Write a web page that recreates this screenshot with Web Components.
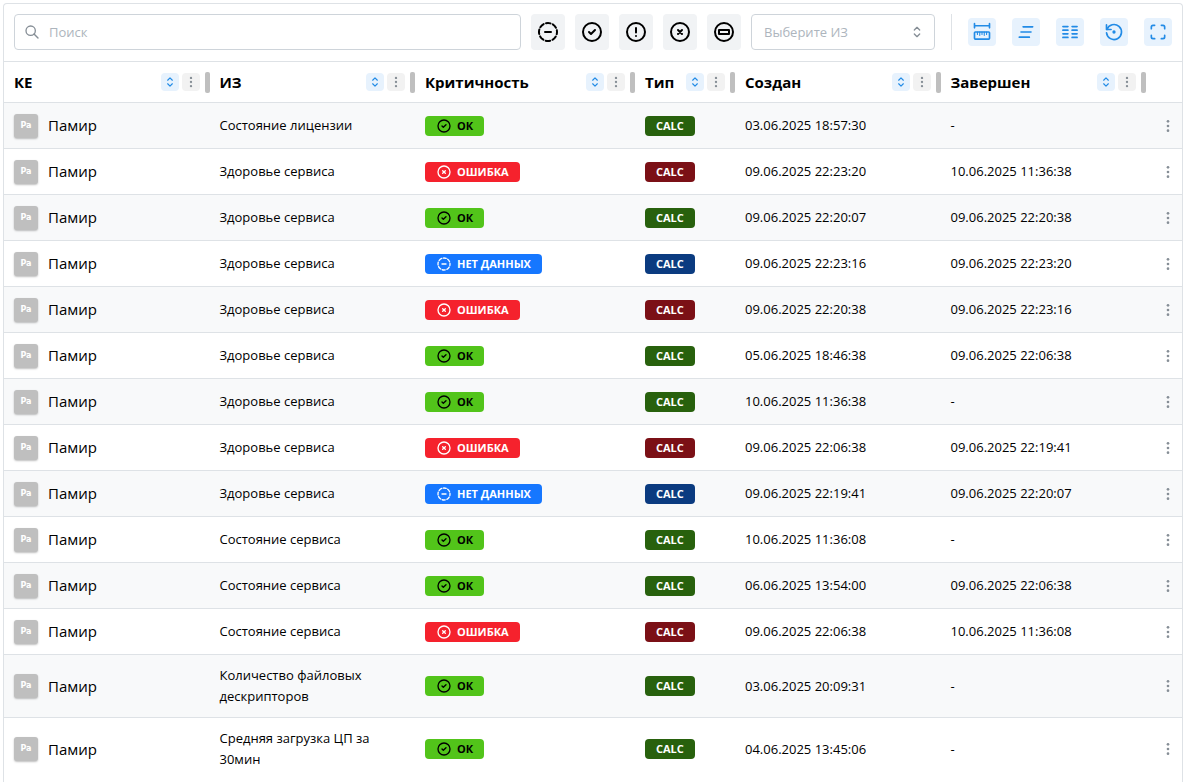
<!DOCTYPE html>
<html lang="ru">
<head>
<meta charset="utf-8">
<meta name="viewport" content="width=device-width, initial-scale=1">
<title>События</title>
<style>
  body {
    margin: 0;
    padding: 3px 3px 0;
    background: #fff;
    color: #000;
    font-family: "Open Sans", "Noto Sans", sans-serif;
    font-size: 13px;
    line-height: 21px;
  }
</style>
</head>
<body>
<event-panel>
  <event-toolbar slot="toolbar"></event-toolbar>
  <event-table></event-table>
</event-panel>

<script>
  const ICONS = {
    search: '<circle cx="10" cy="10" r="7"/><path d="M21 21l-6-6"/>',
    nodata: '<circle cx="12" cy="12" r="9" stroke-dasharray="4.6 2.469" stroke-dashoffset="2.3"/><path d="M9 12h6"/>',
    ok: '<circle cx="12" cy="12" r="9"/><path d="M9 12l2 2l4-4"/>',
    warning: '<circle cx="12" cy="12" r="9"/><path d="M12 8v4.5M12 16v.01"/>',
    error: '<circle cx="12" cy="12" r="9"/><path d="M10 10l4 4m0-4l-4 4"/>',
    disabled: '<circle cx="12" cy="12" r="9"/><rect x="7" y="10" width="10" height="4"/>',
    selector: '<path d="M8 9l4-4l4 4M16 15l-4 4l-4-4"/>',
    dots: '<g fill="currentColor" stroke="none"><circle cx="12" cy="5" r="2"/><circle cx="12" cy="12" r="2"/><circle cx="12" cy="19" r="2"/></g>',
    ruler: '<path d="M3 4.500h18M3 2v5M21 2v5"/><rect x="3" y="12" width="18" height="8.500" rx="1"/><path d="M6.500 12v3M9.300 12v4M12 12v3M14.700 12v4M17.500 12v3" stroke-width="1.300"/>',
    density: '<path d="M8.500 5.800h11.500M6 12h12M4 18.200h12"/>',
    columns: '<path d="M3.500 5.500h6M3.500 9.800h6M3.500 14.200h6M3.500 18.500h6M14.500 5.500h6M14.500 9.800h6M14.500 14.200h6M14.500 18.500h6"/>',
    restore: '<path d="M3.060 13a9 9 0 1 0 .490-4.090"/><path d="M3 3.500v5.500h5.500"/><circle cx="12" cy="12" r="1" fill="currentColor"/>',
    fullscreen: '<path d="M4 8V6a2 2 0 0 1 2-2h2M16 4h2a2 2 0 0 1 2 2v2M20 16v2a2 2 0 0 1-2 2h-2M8 20H6a2 2 0 0 1-2-2v-2"/>'
  };

  /* Outline icon; its size and stroke come from --size and --stroke. */
  class UiIcon extends HTMLElement {
    connectedCallback() {
      this.attachShadow({ mode: 'open' }).innerHTML = `
        <style>
          :host { display: inline-flex; flex: none; }
          svg {
            width: var(--size, 24px); height: var(--size, 24px);
            fill: none; stroke: currentColor; stroke-width: var(--stroke, 2);
            stroke-linecap: round; stroke-linejoin: round;
          }
        </style>
        <svg viewBox="0 0 24 24" aria-hidden="true">${ICONS[this.getAttribute('name')]}</svg>`;
    }
  }
  customElements.define('ui-icon', UiIcon);

  /* Square button with one icon; kind: filter, action, sort, menu, row. */
  class IconButton extends HTMLElement {
    connectedCallback() {
      this.attachShadow({ mode: 'open' }).innerHTML = `
        <style>
          :host { display: inline-flex; flex: none; }
          button {
            display: flex; align-items: center; justify-content: center;
            width: 18px; height: 18px; padding: 0; border: 0; border-radius: 4px;
            background: #f1f3f5; color: #000; cursor: pointer;
          }
          :host([kind="filter"]) button { width: 34px; height: 36px; }
          :host([kind="action"]) button { width: 28px; height: 28px; background: #e7f2fd; color: #228be6; --size: 20px; }
          :host([kind="sort"]) button { background: #e7f2fd; color: #228be6; --size: 14px; }
          :host([kind="menu"]) button { background: #f2f2f2; color: #868e96; --size: 14px; }
          :host([kind="row"]) { display: flex; justify-content: flex-end; }
          :host([kind="row"]) button { background: none; color: #868e96; --size: 16px; }
        </style>
        <button type="button" aria-label="${this.getAttribute('label')}"><ui-icon name="${this.getAttribute('icon')}"></ui-icon></button>`;
    }
  }
  customElements.define('icon-button', IconButton);

  class StatusBadge extends HTMLElement {
    connectedCallback() {
      const icon = this.getAttribute('icon');
      this.attachShadow({ mode: 'open' }).innerHTML = `
        <style>
          :host {
            display: flex; align-items: center; gap: 5px; width: fit-content;
            box-sizing: border-box; height: 20px; padding: 0 11px; border-radius: 4px;
            color: #fff; font-size: 11px; font-weight: 700; line-height: 20px; white-space: nowrap;
            --size: 16px;
          }
          :host([tone="ok"]) { background: #52c41a; color: #000; }
          :host([tone="error"]) { background: #f5222d; }
          :host([tone="nodata"]) { background: #1677ff; }
          :host([tone="ok-dark"]) { background: #28610d; }
          :host([tone="error-dark"]) { background: #7b1016; }
          :host([tone="nodata-dark"]) { background: #0b3b80; }
        </style>
        ${icon ? `<ui-icon name="${icon}"></ui-icon>` : ''}<slot></slot>`;
    }
  }
  customElements.define('status-badge', StatusBadge);

  class ItemLabel extends HTMLElement {
    connectedCallback() {
      this.attachShadow({ mode: 'open' }).innerHTML = `
        <style>
          :host { display: flex; align-items: center; gap: 10px; font-size: 15px; line-height: 25px; }
          .mark {
            width: 24px; height: 24px; border-radius: 3px; background: #bfbfbf; color: #fff;
            box-shadow: 0 1px 2px rgba(0, 0, 0, .25);
            font: 700 8px/24px "DejaVu Sans", sans-serif; text-align: center;
          }
        </style>
        <span class="mark">${this.getAttribute('mark')}</span><slot></slot>`;
    }
  }
  customElements.define('item-label', ItemLabel);

  class EventToolbar extends HTMLElement {
    connectedCallback() {
      const filters = [['nodata', 'Нет данных'], ['ok', 'ОК'], ['warning', 'Предупреждение'], ['error', 'Ошибка'], ['disabled', 'Отключено']];
      const actions = [['ruler', 'Ширина'], ['density', 'Плотность'], ['columns', 'Колонки'], ['restore', 'Сбросить'], ['fullscreen', 'На весь экран']];
      const buttons = (list, kind) => list.map(([icon, label]) =>
        `<icon-button kind="${kind}" icon="${icon}" label="${label}"></icon-button>`).join('');
      this.attachShadow({ mode: 'open' }).innerHTML = `
        <style>
          :host { display: flex; align-items: center; gap: 10px; padding: 10px 10px 11px; border-bottom: 1px solid #dee2e6; }
          .field { display: grid; align-items: center; }
          .field > * { grid-area: 1 / 1; }
          .field ui-icon { pointer-events: none; color: #868e96; --size: 16px; }
          .search { flex: 1; }
          .search ui-icon { justify-self: start; margin-left: 10px; }
          .pick { width: 184px; }
          .pick ui-icon { justify-self: end; margin-right: 10px; }
          input, select {
            box-sizing: border-box; width: 100%; min-width: 0; height: 36px; margin: 0;
            border: 1px solid #ced4da; border-radius: 4px; background: #fff;
            font: inherit; font-size: 13px; color: #adb5bd; outline: 0;
          }
          input { padding: 0 12px 0 34px; }
          input::placeholder { color: #adb5bd; opacity: 1; }
          select { appearance: none; padding: 0 34px 0 12px; }
          .actions { display: flex; align-items: center; gap: 16px; padding-left: 16px; margin-left: 6px; border-left: 1px solid #dee2e6; height: 36px; }
        </style>
        <div class="field search">
          <input type="text" placeholder="Поиск" aria-label="Поиск">
          <ui-icon name="search"></ui-icon>
        </div>
        ${buttons(filters, 'filter')}
        <div class="field pick">
          <select aria-label="Выберите ИЗ"><option>Выберите ИЗ</option></select>
          <ui-icon name="selector"></ui-icon>
        </div>
        <div class="actions">${buttons(actions, 'action')}</div>`;
    }
  }
  customElements.define('event-toolbar', EventToolbar);

  class ColumnHead extends HTMLElement {
    connectedCallback() {
      this.attachShadow({ mode: 'open' }).innerHTML = `
        <style>
          :host { display: flex; align-items: center; gap: 3px; font-size: 15px; font-weight: 700; line-height: 20px; }
          .title { flex: 1; }
          .grip { width: 5px; height: 21px; margin-left: 2px; border-radius: 2px; background: #bfbfbf; cursor: col-resize; }
        </style>
        <span class="title"><slot></slot></span>
        <icon-button kind="sort" icon="selector" label="Сортировать"></icon-button>
        <icon-button kind="menu" icon="dots" label="Меню колонки"></icon-button>
        <span class="grip"></span>`;
    }
  }
  customElements.define('column-head', ColumnHead);

  const LEVELS = { ok: 'ОК', error: 'Ошибка', nodata: 'Нет данных' };
  const EVENTS = [
    ['Состояние лицензии', 'ok', '03.06.2025 18:57:30', '-'],
    ['Здоровье сервиса', 'error', '09.06.2025 22:23:20', '10.06.2025 11:36:38'],
    ['Здоровье сервиса', 'ok', '09.06.2025 22:20:07', '09.06.2025 22:20:38'],
    ['Здоровье сервиса', 'nodata', '09.06.2025 22:23:16', '09.06.2025 22:23:20'],
    ['Здоровье сервиса', 'error', '09.06.2025 22:20:38', '09.06.2025 22:23:16'],
    ['Здоровье сервиса', 'ok', '05.06.2025 18:46:38', '09.06.2025 22:06:38'],
    ['Здоровье сервиса', 'ok', '10.06.2025 11:36:38', '-'],
    ['Здоровье сервиса', 'error', '09.06.2025 22:06:38', '09.06.2025 22:19:41'],
    ['Здоровье сервиса', 'nodata', '09.06.2025 22:19:41', '09.06.2025 22:20:07'],
    ['Состояние сервиса', 'ok', '10.06.2025 11:36:08', '-'],
    ['Состояние сервиса', 'ok', '06.06.2025 13:54:00', '09.06.2025 22:06:38'],
    ['Состояние сервиса', 'error', '09.06.2025 22:06:38', '10.06.2025 11:36:08'],
    ['Количество файловых дескрипторов', 'ok', '03.06.2025 20:09:31', '-'],
    ['Средняя загрузка ЦП за 30мин', 'ok', '04.06.2025 13:45:06', '-']
  ];

  class EventTable extends HTMLElement {
    connectedCallback() {
      const heads = ['КЕ', 'ИЗ', 'Критичность', 'Тип', 'Создан', 'Завершен']
        .map(t => `<th scope="col"><column-head>${t}</column-head></th>`).join('');
      const rows = EVENTS.map(([metric, level, start, end]) => `
        <tr>
          <td><item-label mark="Pa">Памир</item-label></td>
          <td class="metric">${metric}</td>
          <td><status-badge tone="${level}" icon="${level}">${LEVELS[level].toUpperCase()}</status-badge></td>
          <td><status-badge tone="${level}-dark">CALC</status-badge></td>
          <td>${start}</td>
          <td>${end}</td>
          <td class="more"><icon-button kind="row" icon="dots" label="Действия"></icon-button></td>
        </tr>`).join('');
      this.attachShadow({ mode: 'open' }).innerHTML = `
        <style>
          :host { display: block; }
          table { width: 100%; table-layout: fixed; border-collapse: separate; border-spacing: 0; }
          .level { width: 220px; }
          .type { width: 100px; }
          .menu { width: 36px; }
          th { height: 40px; padding: 0 0 0 10px; border-bottom: 1px solid #dee2e6; text-align: left; }
          td { height: 25px; padding: 10px; border-bottom: 1px solid #dee2e6; }
          td.metric { padding-right: 30px; }
          td.more { padding: 0 5px 0 0; }
          tbody tr:nth-child(odd) { background: #f8f9fa; }
          tbody tr:last-child td { border-bottom: 0; }
        </style>
        <table>
          <colgroup><col><col><col class="level"><col class="type"><col><col><col class="menu"></colgroup>
          <thead><tr>${heads}<th></th></tr></thead>
          <tbody>${rows}</tbody>
        </table>`;
    }
  }
  customElements.define('event-table', EventTable);

  class EventPanel extends HTMLElement {
    connectedCallback() {
      this.attachShadow({ mode: 'open' }).innerHTML = `
        <style>
          :host {
            display: block; box-sizing: border-box; min-height: calc(100vh - 3px);
            border: 1px solid #dee2e6; border-bottom: 0; border-radius: 4px 4px 0 0; overflow: hidden;
          }
        </style>
        <slot name="toolbar"></slot>
        <slot></slot>`;
    }
  }
  customElements.define('event-panel', EventPanel);
</script>
</body>
</html>
